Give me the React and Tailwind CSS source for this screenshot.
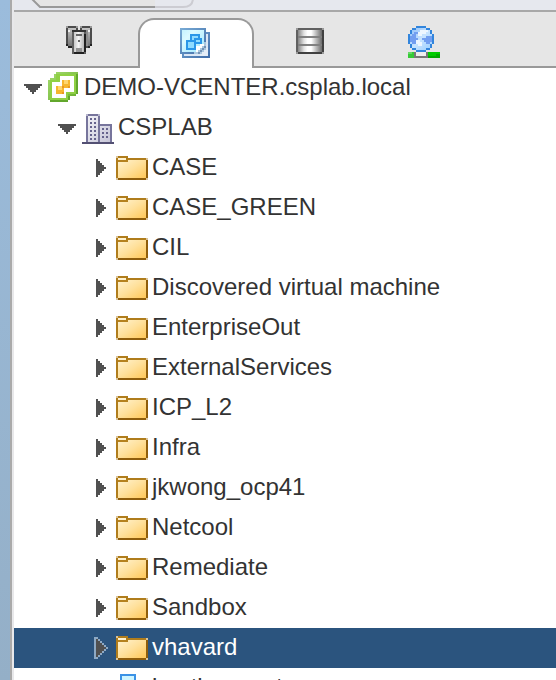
import React from "react";

const folders = [
  "CASE",
  "CASE_GREEN",
  "CIL",
  "Discovered virtual machine",
  "EnterpriseOut",
  "ExternalServices",
  "ICP_L2",
  "Infra",
  "jkwong_ocp41",
  "Netcool",
  "Remediate",
  "Sandbox",
  "vhavard",
];

function HostsIcon() {
  return (
    <svg className="h-8 w-8" viewBox="0 1 16 16" shapeRendering="crispEdges" aria-hidden="true">
      <defs>
        <linearGradient id="tower" x1="0" x2="1" y1="0" y2="0">
          <stop offset="0" stopColor="#c8c8c8" />
          <stop offset=".45" stopColor="#f4f4f4" />
          <stop offset="1" stopColor="#b4b4b4" />
        </linearGradient>
        <linearGradient id="side" x1="0" x2="0" y1="0" y2="1">
          <stop offset="0" stopColor="#c4c4c4" />
          <stop offset="1" stopColor="#757575" />
        </linearGradient>
      </defs>
      <path d="M1 1h6v11H3v-1H1z M8 1h6v10h-2v1H8z" fill="#4c4c4c" />
      <path d="M1 1h1v1H1z M6 1h1v1H6z M8 1h1v1H8z M13 1h1v1h-1z" fill="#999" />
      <path d="M2 2h4v9H2z M9 2h4v9H9z" fill="url(#side)" />
      <path d="M4 3h1v8H4z M11 3h1v8h-1z" fill="#8a8a8a" />
      <path d="M2 3h1v1H2z M12 3h1v1h-1z" fill="#eee" />
      <path d="M1 10h1v1H1z M13 10h1v1h-1z M2 11h2v1H2z M12 11h1v1h-1z" fill="#222" />
      <path d="M4 3h7v1H4z" fill="#333" />
      <path d="M4 4h7v11H4z" fill="#606060" />
      <path d="M10 5h1v9h-1z M5 14h5v1H5z" fill="#202020" />
      <path d="M5 4h5v10H5z" fill="url(#tower)" />
      <path d="M6 5h3v1H6z M7 8h1v1H7z" fill="#666" />
      <path d="M6 12h3v1H6z M6 13h3v1H6z" fill="#929292" />
    </svg>
  );
}

function VmsIcon() {
  return (
    <svg className="h-8 w-8" viewBox="0 0 16 16" shapeRendering="crispEdges" aria-hidden="true">
      <defs>
        <linearGradient id="sheet" x1="0" x2="1" y1="0" y2="1">
          <stop offset="0" stopColor="#c5f3ff" />
          <stop offset=".3" stopColor="#dcfaff" />
          <stop offset="1" stopColor="#9be6ff" />
        </linearGradient>
        <linearGradient id="sheetEdge" x1="0" x2="1" y1="0" y2="1">
          <stop offset="0" stopColor="#79acd6" />
          <stop offset="1" stopColor="#406ca8" />
        </linearGradient>
      </defs>
      <path d="M2 2h14v13H2z" fill="url(#sheetEdge)" />
      <path d="M3 3h12v11H3z" fill="#dce7f5" />
      <path d="M1 0h13v13H1z" fill="url(#sheetEdge)" />
      <path d="M2 1h11v11H2z" fill="url(#sheet)" />
      <path d="M6 3h5v2h1v3h-3v3H4V6h2z" fill="#2b97e8" />
      <path d="M7 4h3v1H7z M9 6h2v1H9z M5 7h3v3H5z" fill="#8fdcff" />
      <path d="M7 5h1v1H7z" fill="#8fdcff" />
      <path d="M13 7h1v6H8v-1h1v-1h1v-1h1V9h1V8h1z" fill="#a9c7df" />
      <path d="M12 8h1v1h-1v1h-1v1h-1v1H9V9h2V8z" fill="#fff" />
      <path d="M13 9h1v1h-1z M12 10h1v1h-1z M11 11h1v1h-1z M10 12h1v1h-1z" fill="#7291b5" />
      <path d="M14 10h1v4h-4v-1h1v-1h1v-1h1z" fill="#e5edf7" />
    </svg>
  );
}

function StorageIcon() {
  return (
    <svg className="h-8 w-8" viewBox="0 0 16 16" shapeRendering="crispEdges" aria-hidden="true">
      <defs>
        <linearGradient id="drum" x1="0" x2="1" y1="0" y2="0">
          <stop offset="0" stopColor="#858585" />
          <stop offset=".25" stopColor="#e2e2e2" />
          <stop offset=".4" stopColor="#fff" />
          <stop offset=".55" stopColor="#fff" />
          <stop offset="1" stopColor="#6b6b6b" />
        </linearGradient>
      </defs>
      <path d="M1 1h14v13H1z" fill="#999" />
      <path d="M2 1h12v1H2z M1 2h1v11H1z" fill="#606060" />
      <path d="M14 2h1v11h-1z M2 13h12v1H2z" fill="#414141" />
      <path d="M2 2h12v11H2z" fill="url(#drum)" />
      <path d="M2 5h12v1H2z M2 9h12v1H2z" fill="#808080" />
    </svg>
  );
}

function NetworkIcon() {
  return (
    <svg className="h-8 w-8" viewBox="0 0 16 16" shapeRendering="crispEdges" aria-hidden="true">
      <defs>
        <linearGradient id="globe" x1="0" x2="1" y1="0" y2="1">
          <stop offset="0" stopColor="#8fbff9" />
          <stop offset=".5" stopColor="#c8e4ff" />
          <stop offset="1" stopColor="#9bcfff" />
        </linearGradient>
      </defs>
      <path d="M4 0h5v1h2v1h1v2h1v5h-1v2h-1v1H9v1H4v-1H2v-1H1V9H0V4h1V2h1V1h2z" fill="#3285dc" />
      <path d="M4 1h5v1h2v2h1v5h-1v2H9v1H4v-1H2V9H1V4h1V2h2z" fill="url(#globe)" />
      <path d="M2 4h1V3h2v1H4v2h1v1H4v2H2V8H1V5h1z M9 5h3v3h-1v1H9V8H8V7H7V6h2z" fill="#729ef0" />
      <path d="M6 2h4v1H9v1H7v1H5V3h1z M4 7h2v1h1v2H5V9H4z" fill="#edf6ff" />
      <path d="M0 13h4v3H0z" fill="#36ca36" />
      <path d="M0 13h2v1H0z" fill="#66d966" />
      <path d="M9 13h7v3H9z" fill="#00a800" />
      <path d="M10 13h6v1h-6z M10 14h4v1h-4z" fill="#00cc00" />
      <path d="M3 13h7v3H3z" fill="#777" />
      <path d="M4 13h5v2H4z" fill="#eee" />
    </svg>
  );
}

function VcenterIcon() {
  return (
    <svg className="h-8 w-8" viewBox="0 0 16 16" shapeRendering="crispEdges" aria-hidden="true">
      <defs>
        <linearGradient id="leaf" x1="0" x2="1" y1="0" y2="1">
          <stop offset="0" stopColor="#a5dc70" />
          <stop offset="1" stopColor="#65ac2b" />
        </linearGradient>
      </defs>
      <path d="M4 0h11v11h-1v1h-3v2h-1v1H1v-1H0V4h1V3h2V1h1z" fill="url(#leaf)" />
      <path d="M4 1h10v10h-4v3H1V4h3z" fill="#8fd044" />
      <path d="M14 1h1v10h-1z M10 12h1v2h-1z M1 14h9v1H1z" fill="#62a72c" />
      <path d="M6 2h7v8H9v3H2V5h4z" fill="#fff" />
      <path d="M7 4h4v4H8v3H4V7h3z" fill="#f6b62d" />
      <path d="M8 4h2v2H8z M5 7h2v2H5z" fill="#ffd66d" />
      <path d="M7 7h1v1H7z M10 7h1v1h-1z M7 10h1v1H7z" fill="#e99820" />
    </svg>
  );
}

function DatacenterIcon() {
  return (
    <svg className="h-8 w-8" viewBox="0 -1 16 16" shapeRendering="crispEdges" aria-hidden="true">
      <defs>
        <linearGradient id="wall" x1="0" x2="1" y1="0" y2="1">
          <stop offset="0" stopColor="#f1f1f6" />
          <stop offset="1" stopColor="#c7c6d8" />
        </linearGradient>
      </defs>
      <path d="M2 0h7v5h6v9H2z" fill="#77759c" />
      <path d="M3 1h5v13H3z M9 6h5v8H9z" fill="url(#wall)" />
      <path d="M0 14h16v1H0z" fill="#535073" />
      <path d="M2 0h1v1H2z M8 0h1v1H8z" fill="#b7b6cd" />
      <path d="M4 2h1v1H4z M6 2h1v1H6z M4 4h1v1H4z M6 4h1v1H6z M4 6h1v1H4z M6 6h1v1H6z M4 8h1v1H4z M6 8h1v1H6z M4 10h1v1H4z M6 10h1v1H6z M4 12h1v1H4z M6 12h1v1H6z M10 7h1v1h-1z M12 7h1v1h-1z M10 9h1v1h-1z M12 9h1v1h-1z M10 11h1v1h-1z M12 11h1v1h-1z" fill="#66638d" />
    </svg>
  );
}

function FolderIcon() {
  return (
    <svg className="h-6 w-8" viewBox="0 0 16 12" shapeRendering="crispEdges" aria-hidden="true">
      <defs>
        <linearGradient id="folder" x1="0" x2="1" y1="0" y2="1">
          <stop offset="0" stopColor="#fff2cf" />
          <stop offset=".5" stopColor="#ffe09a" />
          <stop offset="1" stopColor="#ffc758" />
        </linearGradient>
      </defs>
      <path d="M0 0h6v1h10v11H0z" fill="#d9c39a" />
      <path d="M1 0h5v1h9v1H1z M0 1h1v10H0z" fill="#b07d1c" />
      <path d="M15 2h1v9h-1z M1 11h14v1H1z" fill="#8f5d0b" />
      <path d="M1 2h14v9H1z" fill="url(#folder)" />
      <path d="M1 1h4v1H1z" fill="#fff2cf" />
      <path d="M1 2h5v1H1z" fill="#b5821f" />
    </svg>
  );
}

function SmallVmIcon() {
  return (
    <svg className="h-8 w-8" viewBox="0 0 16 16" shapeRendering="crispEdges" aria-hidden="true">
      <path d="M2 0h8v13H2z" fill="#3b92e6" />
      <path d="M3 1h6v11H3z" fill="#cff5ff" />
    </svg>
  );
}

function Arrow({ open, selected }) {
  if (open) {
    return (
      <svg className="h-5 w-5" viewBox="0 0 10 10" shapeRendering="crispEdges" aria-hidden="true">
        <path d="M0 3h9v1H8v1H7v1H6v1H5v1H4V7H3V6H2V5H1V4H0z" fill="#505050" />
      </svg>
    );
  }
  return (
    <svg className="h-5.5 w-4" viewBox="0 0 8 11" shapeRendering="crispEdges" aria-hidden="true">
      {selected && (
        <path d="M0 0h2v1h1v1h1v1h1v1h1v1h1v1H6v1H5v1H4v1H3v1H2v1H0z" fill="#8ea9c4" />
      )}
      <path d="M1 1h1v1h1v1h1v1h1v1h1v1H5v1H4v1H3v1H2v1H1z" fill="#505050" />
    </svg>
  );
}

const tabs = [
  { name: "Hosts and clusters", Icon: HostsIcon },
  { name: "VMs and templates", Icon: VmsIcon, active: true },
  { name: "Storage", Icon: StorageIcon },
  { name: "Networking", Icon: NetworkIcon },
];

function Tabs() {
  return (
    <nav className="flex h-14 border-b-2 border-[#999] bg-[#e6e6e6] pl-2" aria-label="Inventory views">
      {tabs.map(({ name, Icon, active }) => (
        <button
          key={name}
          type="button"
          aria-label={name}
          className={
            active
              ? "-mb-0.5 mt-1.5 flex w-29 items-start justify-center rounded-t-2xl border-2 border-b-0 border-[#999] bg-white pr-1 pt-2"
              : "flex w-29 justify-center pr-1 pt-3.5 first:pr-0 last:pr-2"
          }
        >
          <Icon />
        </button>
      ))}
    </nav>
  );
}

function TreeRow({ children, className }) {
  return (
    <li className={`flex h-10 items-center whitespace-nowrap ${className}`}>{children}</li>
  );
}

export default function App() {
  return (
    <div className="flex h-screen overflow-hidden bg-white font-['Liberation_Sans',Arial,sans-serif] text-2xl text-[#333]">
      <div className="w-3 shrink-0 border-r-2 border-[#aaa] bg-linear-to-b from-[#9bbcdc] to-[#94afc7]" />
      <div className="w-0.5 shrink-0 bg-[#e8e8ea]" />
      <main className="min-w-0 flex-1">
        <header className="h-3 border-b-2 border-[#a8a8a8] bg-[#e6e8ee]">
          <svg className="block h-2.5 w-52" viewBox="0 0 208 10" aria-hidden="true">
            <path d="M141 7h28q10 0 10-9" fill="none" stroke="#ccccd2" strokeWidth="2" />
            <path d="M18-1l8 8h115V-1" fill="#e5e5e5" />
            <path d="M18-1l8 8h115" fill="none" stroke="#999" strokeWidth="2" />
          </svg>
        </header>
        <Tabs />
        <ul>
          <TreeRow className="pl-2.5">
            <Arrow open />
            <span className="ml-1 mr-1"><VcenterIcon /></span>
            <span className="pb-0.5">DEMO-VCENTER.csplab.local</span>
          </TreeRow>
          <TreeRow className="pl-11">
            <Arrow open />
            <span className="ml-1 mr-1"><DatacenterIcon /></span>
            <span className="pb-0.5">CSPLAB</span>
          </TreeRow>
          {folders.map((name) => {
            const selected = name === "vhavard";
            return (
              <TreeRow key={name} className={selected ? "bg-[#2b547e] pl-20 text-white" : "pl-20"}>
                <Arrow selected={selected} />
                <span className="ml-1.5 mr-1"><FolderIcon /></span>
                <span className="pb-0.5">{name}</span>
              </TreeRow>
            );
          })}
          <TreeRow className="pl-20">
            <span className="ml-5.5 mr-1 pt-1"><SmallVmIcon /></span>
            <span className="pb-0.5">bastion-nest</span>
          </TreeRow>
        </ul>
      </main>
    </div>
  );
}
